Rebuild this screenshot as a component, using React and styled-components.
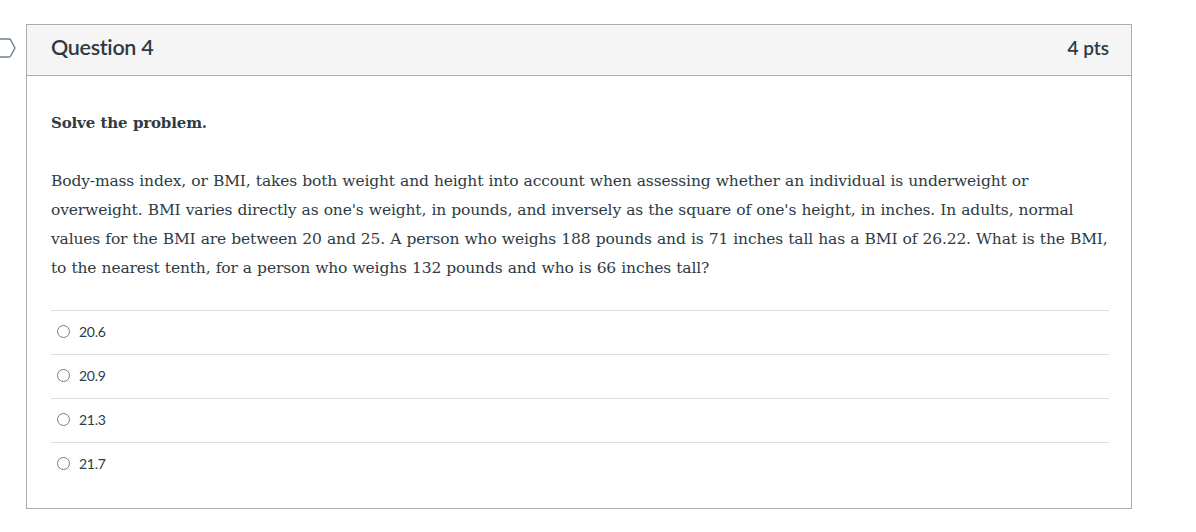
import React from 'react';
import styled, { createGlobalStyle } from 'styled-components';

const GlobalStyle = createGlobalStyle`
  html, body {
    margin: 0;
    padding: 0;
    background: #ffffff;
  }
`;

const answers = ['20.6', '20.9', '21.3', '21.7'];

const StyledPage = styled.div`
  position: relative;
  width: 1196px;
  height: 532px;
  padding: 24px 0 0 26px;
  box-sizing: border-box;
  color: #2d3b45;
`;

const StyledFlag = styled.svg`
  position: absolute;
  left: -6px;
  top: 37px;
`;

const StyledCard = styled.div`
  width: 1106px;
  border: 1px solid #adadad;
  box-sizing: border-box;
`;

const StyledHeader = styled.div`
  height: 51px;
  display: flex;
  justify-content: space-between;
  align-items: center;
  padding: 0 22px 6px 24px;
  box-sizing: border-box;
  background: #f5f5f5;
  border-bottom: 1px solid #adadad;
  font-family: Lato, 'Liberation Sans', sans-serif;
`;

const StyledTitle = styled.h2`
  margin: 0;
  font-size: 21.5px;
  font-weight: 600;
  letter-spacing: -0.3px;
`;

const StyledPoints = styled.div`
  font-size: 19px;
  font-weight: 600;
`;

const StyledContent = styled.div`
  padding: 33px 22px 22px 24px;
`;

const StyledText = styled.p`
  margin: 0 0 29px;
  font-family: 'DejaVu Serif', 'Liberation Serif', serif;
  font-size: ${({ bold }) => (bold ? '15px' : '15.5px')};
  line-height: 29px;
  font-weight: ${({ bold }) => (bold ? 700 : 400)};
  letter-spacing: -0.15px;
  word-spacing: 0.4px;

  &:last-of-type {
    margin-bottom: 0;
  }
`;

const StyledAnswers = styled.div`
  margin-top: 27px;
`;

const StyledAnswer = styled.label`
  height: 40px;
  display: flex;
  align-items: center;
  padding: 0 0 3px 6px;
  gap: 9px;
  border-top: 1px solid #dcdcdc;
  font-family: Lato, 'Liberation Sans', sans-serif;
  font-size: 14px;
  letter-spacing: -0.3px;
`;

const StyledRadio = styled.span`
  width: 11px;
  height: 11px;
  border: 1px solid #7c7c7c;
  border-radius: 50%;
`;

const App = () => (
  <>
    <GlobalStyle />
    <StyledPage>
      <StyledFlag width="22" height="22" viewBox="0 0 22 22">
        <path
          d="M1 2 H15 a2 2 0 0 1 1.6 0.8 L21 11 L16.6 19.2 a2 2 0 0 1 -1.6 0.8 H1 Z"
          fill="#ffffff"
          stroke="#6c8193"
          strokeWidth="1.4"
        />
      </StyledFlag>
      <StyledCard>
        <StyledHeader>
          <StyledTitle>Question 4</StyledTitle>
          <StyledPoints>4 pts</StyledPoints>
        </StyledHeader>
        <StyledContent>
          <StyledText bold>Solve the problem.</StyledText>
          <StyledText>
            Body-mass index, or BMI, takes both weight and height into account when assessing
            whether an individual is underweight or overweight. BMI varies directly as one's
            weight, in pounds, and inversely as the square of one's height, in inches. In adults,
            normal values for the BMI are between 20 and 25. A person who weighs 188 pounds and is
            71 inches tall has a BMI of 26.22. What is the BMI, to the nearest tenth, for a person
            who weighs 132 pounds and who is 66 inches tall?
          </StyledText>
          <StyledAnswers>
            {answers.map(answer => (
              <StyledAnswer key={answer}>
                <StyledRadio />
                {answer}
              </StyledAnswer>
            ))}
          </StyledAnswers>
        </StyledContent>
      </StyledCard>
    </StyledPage>
  </>
);

export default App;
